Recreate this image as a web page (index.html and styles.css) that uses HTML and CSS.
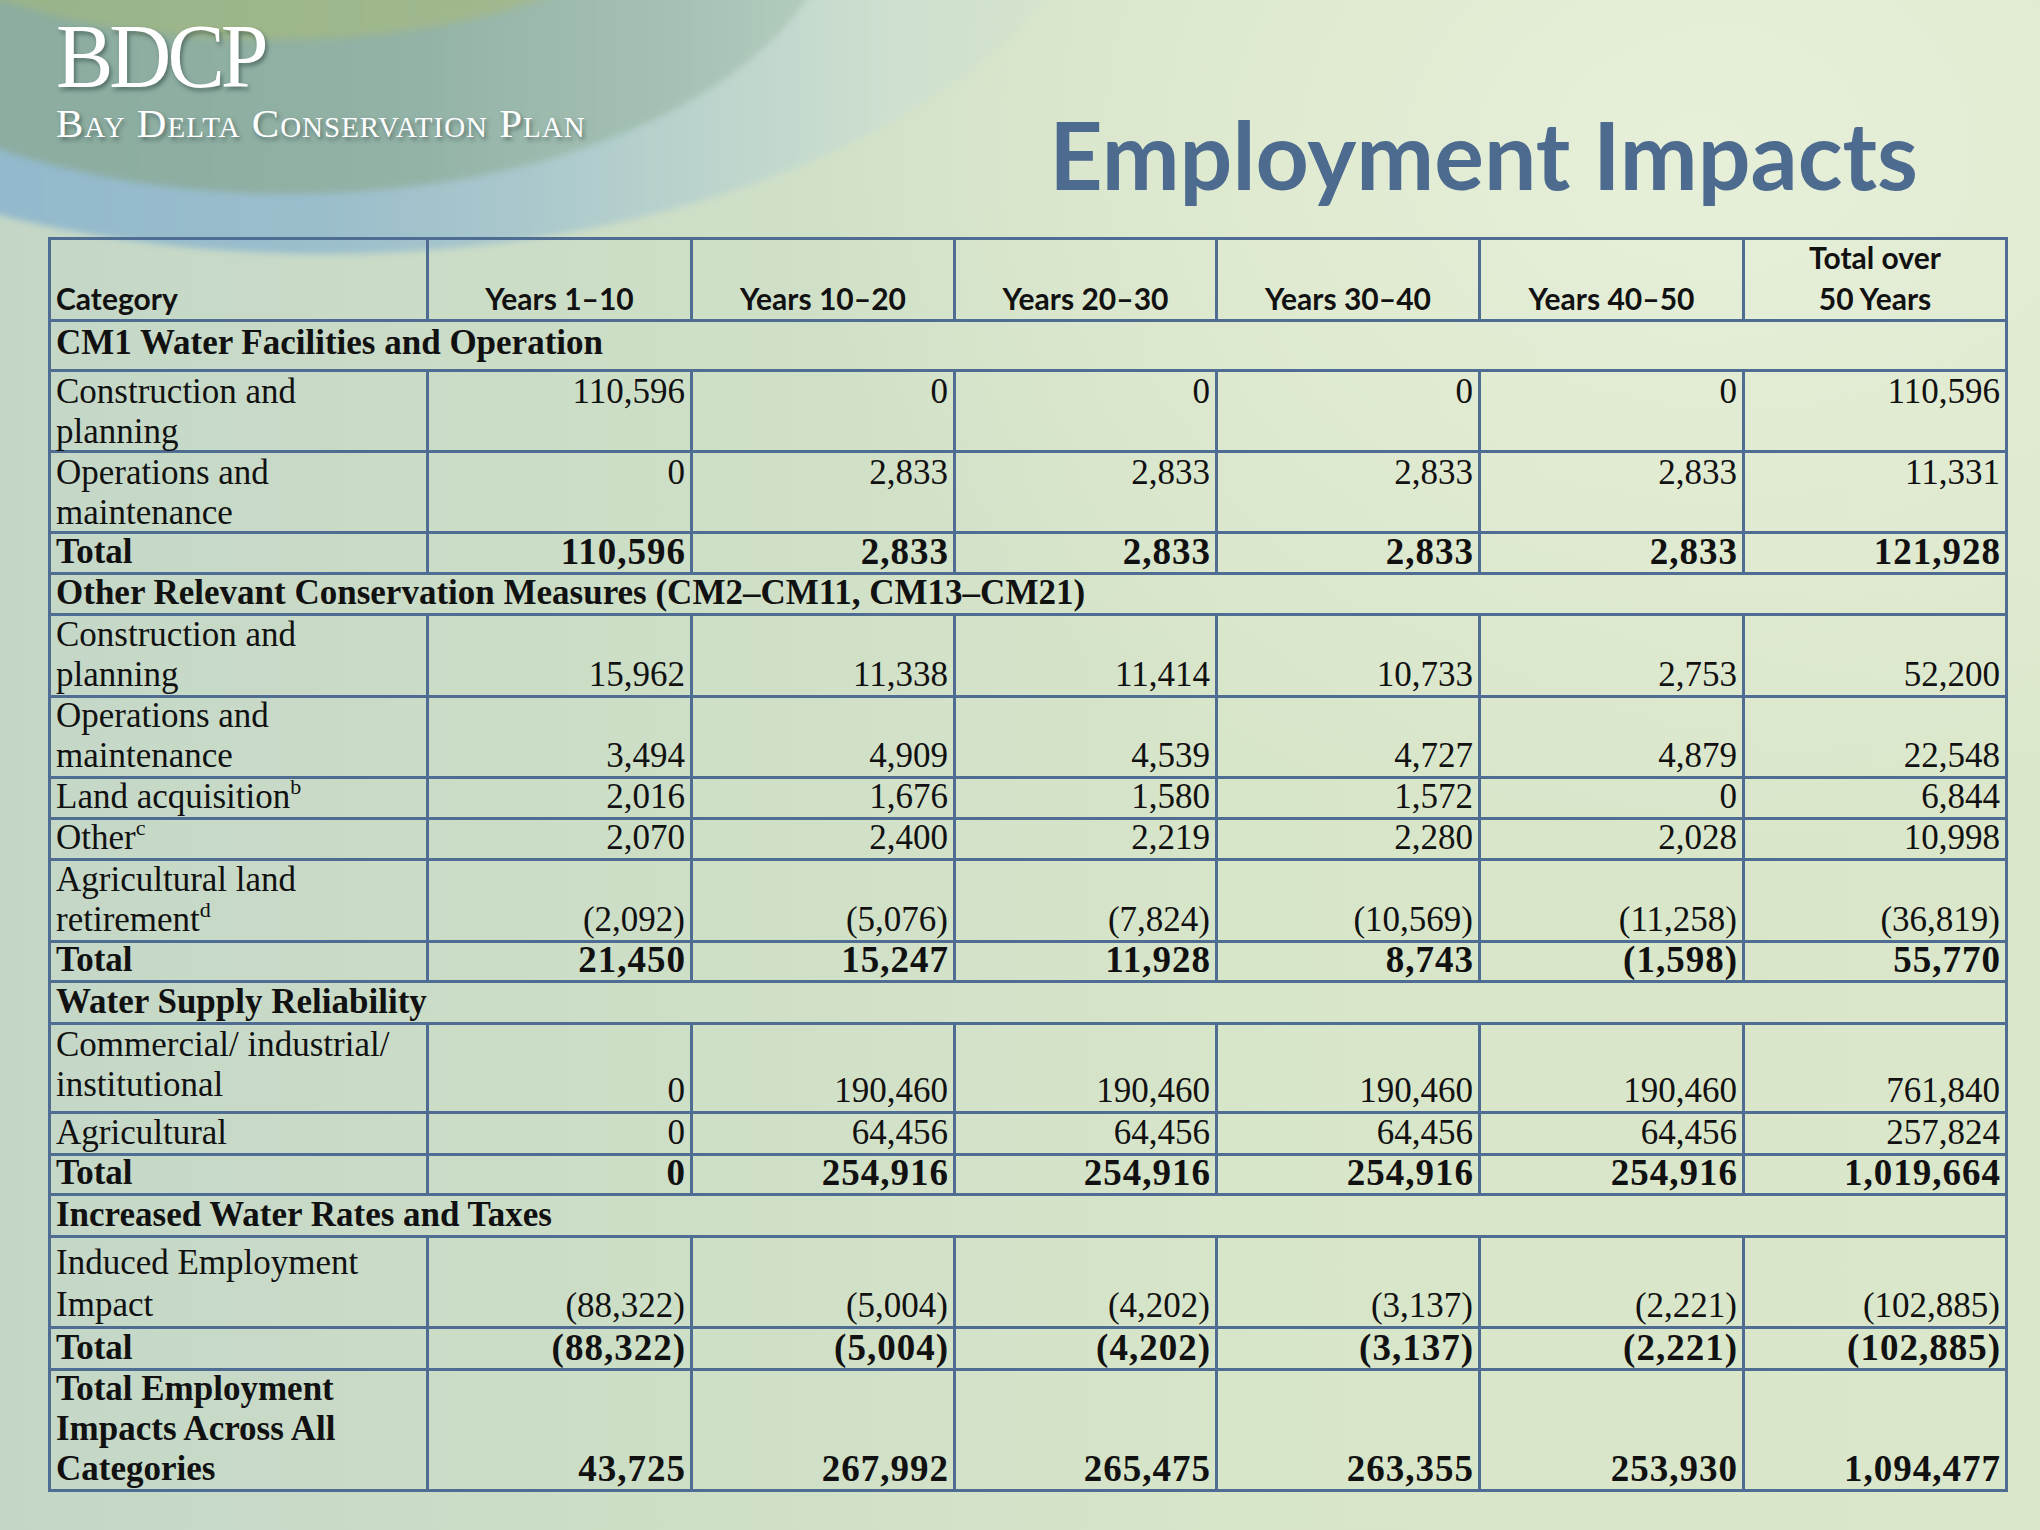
FILE: index.html
```html
<!DOCTYPE html>
<html lang="en">
<head>
<meta charset="utf-8">
<title>Employment Impacts</title>
<link rel="stylesheet" href="styles.css">
</head>
<body>
<div class="slide">
  <div class="bg">
    <div class="arc arc-blue"></div>
    <div class="arc arc-teal"></div>
    <div class="arc arc-olive"></div>
  </div>
  <header class="top">
    <div class="logo">
      <div class="logo-mark">BDCP</div>
      <div class="logo-name">Bay Delta Conservation Plan</div>
    </div>
    <h1 class="title">Employment Impacts</h1>
  </header>

  <div class="grid">
    <div class="c hd lbl">Category</div>
    <div class="c hd">Years 1–10</div>
    <div class="c hd">Years 10–20</div>
    <div class="c hd">Years 20–30</div>
    <div class="c hd">Years 30–40</div>
    <div class="c hd">Years 40–50</div>
    <div class="c hd">Total over<br>50 Years</div>

    <div class="c sec up">CM1 Water Facilities and Operation</div>

    <div class="c lbl up">Construction and<br>planning</div>
    <div class="c num up">110,596</div>
    <div class="c num up">0</div>
    <div class="c num up">0</div>
    <div class="c num up">0</div>
    <div class="c num up">0</div>
    <div class="c num up">110,596</div>

    <div class="c lbl up">Operations and<br>maintenance</div>
    <div class="c num up">0</div>
    <div class="c num up">2,833</div>
    <div class="c num up">2,833</div>
    <div class="c num up">2,833</div>
    <div class="c num up">2,833</div>
    <div class="c num up">11,331</div>

    <div class="c lbl b">Total</div>
    <div class="c num b">110,596</div>
    <div class="c num b">2,833</div>
    <div class="c num b">2,833</div>
    <div class="c num b">2,833</div>
    <div class="c num b">2,833</div>
    <div class="c num b">121,928</div>

    <div class="c sec">Other Relevant Conservation Measures (CM2–CM11, CM13–CM21)</div>

    <div class="c lbl">Construction and<br>planning</div>
    <div class="c num">15,962</div>
    <div class="c num">11,338</div>
    <div class="c num">11,414</div>
    <div class="c num">10,733</div>
    <div class="c num">2,753</div>
    <div class="c num">52,200</div>

    <div class="c lbl">Operations and<br>maintenance</div>
    <div class="c num">3,494</div>
    <div class="c num">4,909</div>
    <div class="c num">4,539</div>
    <div class="c num">4,727</div>
    <div class="c num">4,879</div>
    <div class="c num">22,548</div>

    <div class="c lbl"><span>Land acquisition<sup class="fn">b</sup></span></div>
    <div class="c num">2,016</div>
    <div class="c num">1,676</div>
    <div class="c num">1,580</div>
    <div class="c num">1,572</div>
    <div class="c num">0</div>
    <div class="c num">6,844</div>

    <div class="c lbl"><span>Other<sup class="fn">c</sup></span></div>
    <div class="c num">2,070</div>
    <div class="c num">2,400</div>
    <div class="c num">2,219</div>
    <div class="c num">2,280</div>
    <div class="c num">2,028</div>
    <div class="c num">10,998</div>

    <div class="c lbl"><span>Agricultural land<br>retirement<sup class="fn">d</sup></span></div>
    <div class="c num">(2,092)</div>
    <div class="c num">(5,076)</div>
    <div class="c num">(7,824)</div>
    <div class="c num">(10,569)</div>
    <div class="c num">(11,258)</div>
    <div class="c num">(36,819)</div>

    <div class="c lbl b">Total</div>
    <div class="c num b">21,450</div>
    <div class="c num b">15,247</div>
    <div class="c num b">11,928</div>
    <div class="c num b">8,743</div>
    <div class="c num b">(1,598)</div>
    <div class="c num b">55,770</div>

    <div class="c sec">Water Supply Reliability</div>

    <div class="c lbl up">Commercial/ industrial/<br>institutional</div>
    <div class="c num">0</div>
    <div class="c num">190,460</div>
    <div class="c num">190,460</div>
    <div class="c num">190,460</div>
    <div class="c num">190,460</div>
    <div class="c num">761,840</div>

    <div class="c lbl">Agricultural</div>
    <div class="c num">0</div>
    <div class="c num">64,456</div>
    <div class="c num">64,456</div>
    <div class="c num">64,456</div>
    <div class="c num">64,456</div>
    <div class="c num">257,824</div>

    <div class="c lbl b">Total</div>
    <div class="c num b">0</div>
    <div class="c num b">254,916</div>
    <div class="c num b">254,916</div>
    <div class="c num b">254,916</div>
    <div class="c num b">254,916</div>
    <div class="c num b">1,019,664</div>

    <div class="c sec">Increased Water Rates and Taxes</div>

    <div class="c lbl tall">Induced Employment<br>Impact</div>
    <div class="c num">(88,322)</div>
    <div class="c num">(5,004)</div>
    <div class="c num">(4,202)</div>
    <div class="c num">(3,137)</div>
    <div class="c num">(2,221)</div>
    <div class="c num">(102,885)</div>

    <div class="c lbl b">Total</div>
    <div class="c num b">(88,322)</div>
    <div class="c num b">(5,004)</div>
    <div class="c num b">(4,202)</div>
    <div class="c num b">(3,137)</div>
    <div class="c num b">(2,221)</div>
    <div class="c num b">(102,885)</div>

    <div class="c lbl b">Total Employment<br>Impacts Across All<br>Categories</div>
    <div class="c num b">43,725</div>
    <div class="c num b">267,992</div>
    <div class="c num b">265,475</div>
    <div class="c num b">263,355</div>
    <div class="c num b">253,930</div>
    <div class="c num b">1,094,477</div>
  </div>
</div>
</body>
</html>
```

FILE: styles.css
```css
html, body {
  margin: 0;
  padding: 0;
}

body {
  width: 2040px;
  height: 1530px;
  overflow: hidden;
  font-family: "Liberation Serif", "Times New Roman", serif;
  color: #111;
}

.slide {
  position: relative;
  width: 2040px;
  height: 1530px;
  overflow: hidden;
  background:
    radial-gradient(ellipse 900px 700px at 1700px 150px, rgba(232, 240, 218, 0.9), rgba(232, 240, 218, 0) 100%),
    linear-gradient(90deg, #c4d7c7 0%, #cddec7 30%, #d7e5c9 60%, #dbe7cb 100%);
}

/* decorative background arcs */
.bg {
  position: absolute;
  inset: 0;
  z-index: 0;
  pointer-events: none;
}

.arc {
  position: absolute;
  border-radius: 50%;
}

.arc-blue {
  left: -478px;
  top: -654px;
  width: 1606px;
  height: 908px;
  background: linear-gradient(90deg, #8fb6cb 0%, #93b9cc 30%, #9bbecc 50%, #a9c7cc 62%, #bcd4cd 74%, #cfe0cf 86%, rgba(218, 231, 206, 0) 100%);
  filter: blur(3px);
}

.arc-teal {
  left: -260px;
  top: -400px;
  width: 1100px;
  height: 594px;
  background: linear-gradient(90deg, #8aac9f 0%, #8daea1 40%, #94b3a7 62%, #a3bfb2 82%, #b4cdbf 100%);
  filter: blur(3px);
}

.arc-olive {
  left: -130px;
  top: -270px;
  width: 800px;
  height: 310px;
  background: linear-gradient(90deg, #98b38a 0%, #9db68a 50%, #a4b98f 100%);
  filter: blur(4px);
}

/* header */
.top {
  position: relative;
  z-index: 1;
  height: 237px;
  display: flex;
  justify-content: space-between;
  align-items: flex-start;
}

.logo {
  padding-top: 16px;
  padding-left: 56px;
  color: #ffffff;
  text-shadow: 2px 3px 4px rgba(40, 60, 60, 0.55);
}

.logo-mark {
  font-family: "Liberation Serif", "Times New Roman", serif;
  font-size: 86px;
  line-height: 86px;
  letter-spacing: -4px;
  transform: scaleY(1.06);
  transform-origin: left bottom;
}

.logo-name {
  margin-top: 1px;
  font-family: "Liberation Serif", "Times New Roman", serif;
  font-size: 41px;
  line-height: 40px;
  font-variant: small-caps;
  letter-spacing: 1px;
}

.title {
  margin: 108px 122px 0 0;
  font-family: Lato, "Liberation Sans", sans-serif;
  font-weight: 700;
  font-size: 93px;
  line-height: 93px;
  color: #4d6a8f;
  letter-spacing: 0;
}

/* table */
.grid {
  position: relative;
  z-index: 1;
  margin-left: 48px;
  width: 1960px;
  box-sizing: border-box;
  display: grid;
  grid-template-columns: 378px 264px 263px 262px 263px 264px 263px;
  grid-template-rows: 82px 50px 81px 81px 41px 41px 82px 81px 41px 41px 82px 40px 42px 89px 42px 40px 42px 91px 42px 121px;
  border-left: 3px solid #4f6d92;
  border-top: 3px solid #4f6d92;
}

.c {
  box-sizing: border-box;
  border-right: 3px solid #4f6d92;
  border-bottom: 3px solid #4f6d92;
  padding: 0 5px;
  display: flex;
  align-items: flex-end;
  font-size: 35px;
  line-height: 40px;
  white-space: nowrap;
}

.hd {
  justify-content: center;
  text-align: center;
  font-family: Lato, "Liberation Sans", sans-serif;
  font-weight: 700;
  font-size: 30px;
  line-height: 41px;
  padding-bottom: 0;
}

.hd.lbl {
  justify-content: flex-start;
  text-align: left;
}

.lbl {
  justify-content: flex-start;
  text-align: left;
}

.num {
  justify-content: flex-end;
  text-align: right;
}

.up {
  align-items: flex-start;
}

.b {
  font-weight: 700;
}

.num.b {
  font-size: 37px;
  letter-spacing: 1px;
  padding-right: 4px;
}

.sec {
  grid-column: 1 / -1;
  font-weight: 700;
  justify-content: flex-start;
}

.sec.up {
  padding-top: 1px;
}

.tall {
  line-height: 42px;
}

.fn {
  font-size: 22px;
  line-height: 0;
  vertical-align: 14px;
}
```
